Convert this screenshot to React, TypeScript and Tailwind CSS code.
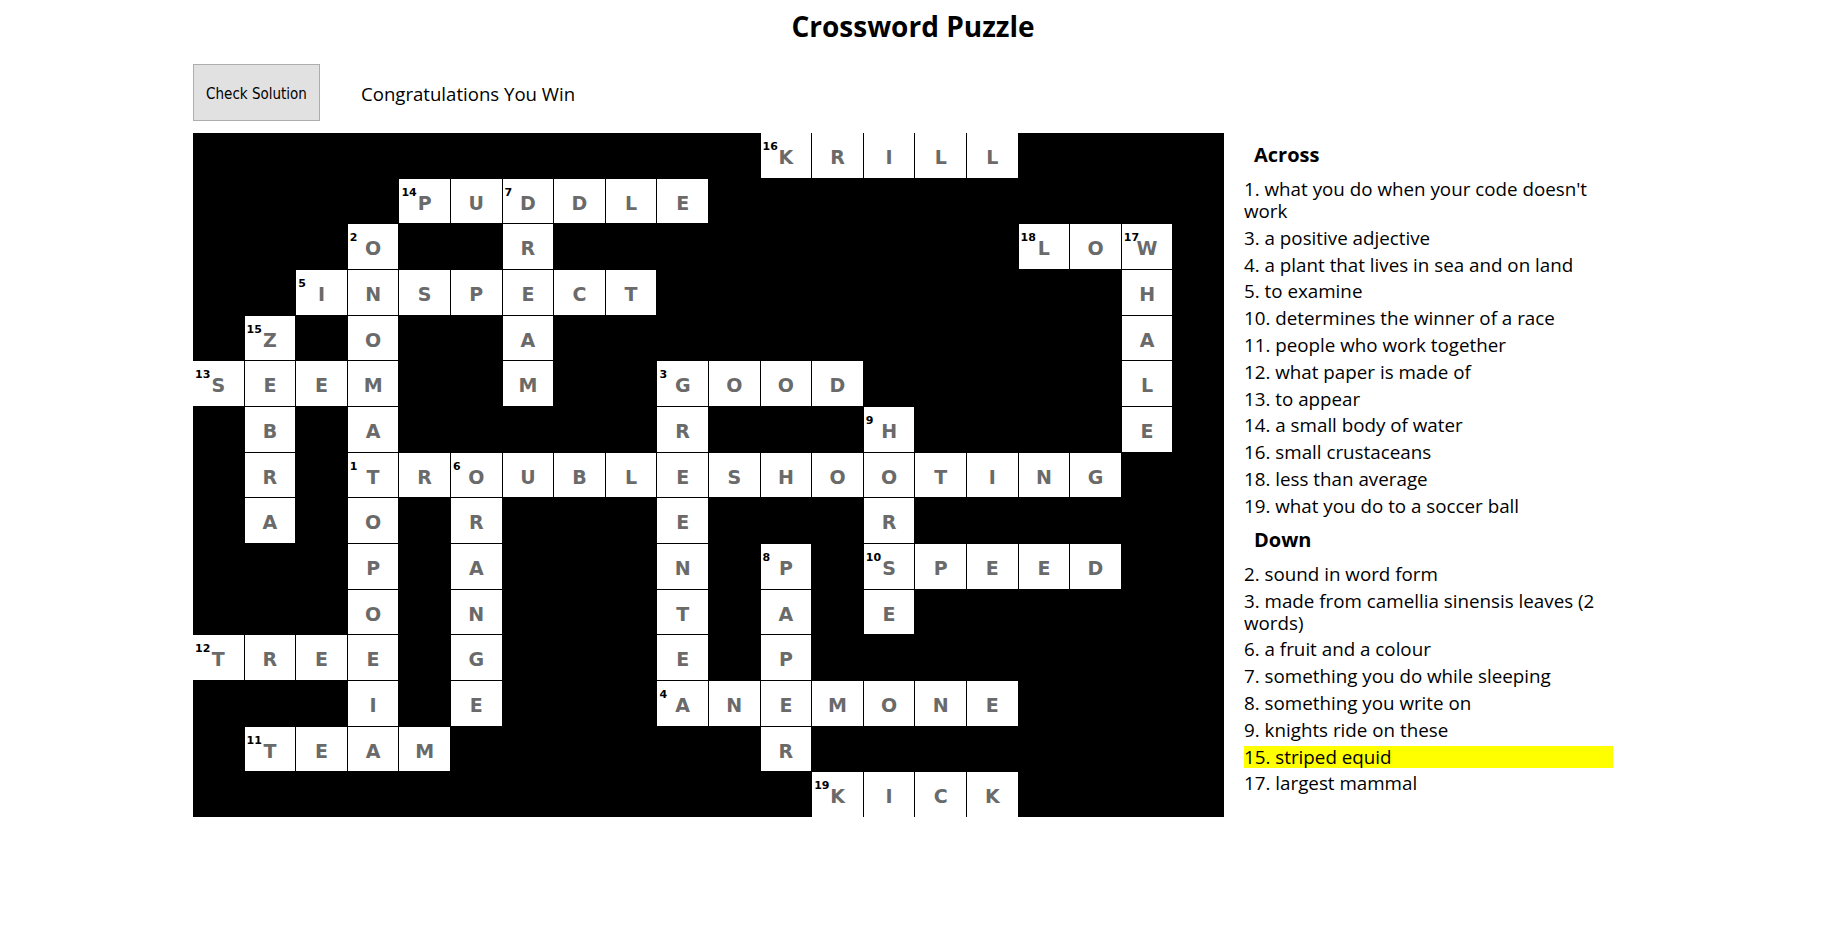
import React, { useState } from 'react';

const rows = [
    '...........KRILL....',
    '....PUDDLE..........',
    '...O..R.........LOW.',
    '..INSPECT.........H.',
    '.Z.O..A...........A.',
    'SEEM..M..GOOD.....L.',
    '.B.A.....R...H....E.',
    '.R.TROUBLESHOOTING..',
    '.A.O.R...E...R......',
    '...P.A...N.P.SPEED..',
    '...O.N...T.A.E......',
    'TREE.G...E.P........',
    '...I.E...ANEMONE....',
    '.TEAM......R........',
    '............KICK....',
];

const numbers: Record<string, number> = {
    '0,11': 16, '1,4': 14, '1,6': 7, '2,3': 2, '2,16': 18, '2,18': 17,
    '3,2': 5, '4,1': 15, '5,0': 13, '5,9': 3, '6,13': 9, '7,3': 1,
    '7,5': 6, '9,11': 8, '9,13': 10, '11,0': 12, '12,9': 4, '13,1': 11,
    '14,12': 19,
};

const across = [
    "1. what you do when your code doesn't work",
    '3. a positive adjective',
    '4. a plant that lives in sea and on land',
    '5. to examine',
    '10. determines the winner of a race',
    '11. people who work together',
    '12. what paper is made of',
    '13. to appear',
    '14. a small body of water',
    '16. small crustaceans',
    '18. less than average',
    '19. what you do to a soccer ball',
];

const down = [
    '2. sound in word form',
    '3. made from camellia sinensis leaves (2 words)',
    '6. a fruit and a colour',
    '7. something you do while sleeping',
    '8. something you write on',
    '9. knights ride on these',
    '15. striped equid',
    '17. largest mammal',
];

const Cell: React.FC<{ r: number; c: number; ch: string }> = ({ r, c, ch }) => {
    if (ch === '.') return <div />;
    const num = numbers[`${r},${c}`];
    return (
        <div className="relative flex items-center justify-center bg-white pt-[4px]">
            {num && (
                <span className="absolute left-[2px] top-[8px] text-[11px] font-bold leading-none text-black">
                    {num}
                </span>
            )}
            <span className="text-[19px] font-bold text-[#6a6a6a]">{ch}</span>
        </div>
    );
};

const ClueList: React.FC<{ title: string; clues: string[]; highlight?: string }> = ({ title, clues, highlight }) => (
    <div>
        <h2 className="pl-[10px] text-[20px] font-bold leading-[24px] text-black">{title}</h2>
        <ul className="mt-[11px] flex flex-col gap-[4.8px]">
            {clues.map((clue) => (
                <li
                    key={clue}
                    className={`leading-[22px] ${clue === highlight ? 'bg-[#ffff00]' : ''}`}
                >
                    {clue}
                </li>
            ))}
        </ul>
    </div>
);

export default function App() {
    const [message] = useState('Congratulations You Win');

    return (
        <div className="min-h-screen bg-white text-black font-['Open_Sans','Lato',sans-serif]">
            <div className="mx-auto w-[1440px]">
                <h1 className="pt-[9px] text-center text-[28px] font-bold leading-[34px]">Crossword Puzzle</h1>

                <div className="mt-[21px] flex items-center">
                    <button className="h-[57px] w-[127px] border border-[#adadad] bg-[#e1e1e1] pt-[3px] text-[15px] text-black font-['DejaVu_Sans_Condensed','DejaVu_Sans',sans-serif]">
                        Check Solution
                    </button>
                    <p className="ml-[41px] pt-[2px] text-[18.6px]">{message}</p>
                </div>

                <div className="mt-[12px] flex items-start">
                    <div className="grid h-[684px] w-[1031px] grid-cols-[repeat(20,minmax(0,1fr))] grid-rows-[repeat(15,minmax(0,1fr))] gap-px bg-black font-['DejaVu_Sans',sans-serif]">
                        {rows.map((row, r) =>
                            row.split('').map((ch, c) => <Cell key={`${r}-${c}`} r={r} c={c} ch={ch} />)
                        )}
                    </div>

                    <div className="ml-[20px] flex w-[369px] flex-col gap-[11px] pt-[10px] text-[18.8px]">
                        <ClueList title="Across" clues={across} />
                        <ClueList title="Down" clues={down} highlight="15. striped equid" />
                    </div>
                </div>
            </div>
        </div>
    );
}
